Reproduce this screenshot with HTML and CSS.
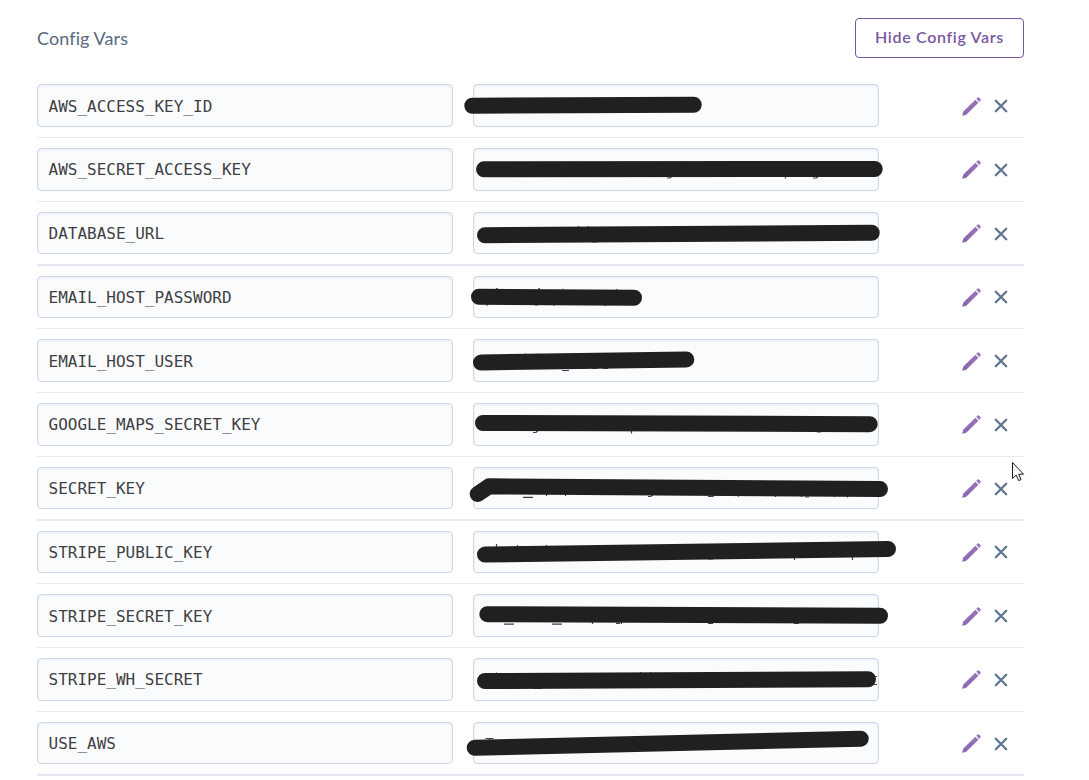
FILE: index.html
```html
<!DOCTYPE html>
<html lang="en">
<head>
<meta charset="utf-8">
<title>Config Vars</title>
<link rel="stylesheet" href="styles.css">
</head>
<body>
<svg class="defs" aria-hidden="true">
  <defs>
    <linearGradient id="violet" x1="0" y1="0" x2="0" y2="1"><stop offset="0" stop-color="#9b79bd"/><stop offset="1" stop-color="#8a65ae"/></linearGradient>
    <symbol id="pencil" viewBox="0 0 19 19"><path fill="url(#violet)" d="M.2 18.800 1.100 15.300Q1.300 14.600 1.900 14L13.300 2.700 16.400 5.800 5 17.100Q4.400 17.700 3.700 17.900ZM14.200 1.800 15 1Q16.300-.3 17.600.9L18.100 1.400Q19.400 2.700 18.100 4.100L17.300 4.900Z"/></symbol>
    <symbol id="cross" viewBox="0 0 14 14"><path fill="none" stroke="#62758f" stroke-width="2.300" stroke-linecap="round" d="M1.800 1.800 12.200 12.200M12.200 1.800 1.800 12.200"/></symbol>
  </defs>
</svg>
<main class="panel">
  <header class="head">
    <h1 class="title">Config Vars</h1>
    <button class="toggle">Hide Config Vars</button>
  </header>
  <ul class="vars">
    <li class="row low"><span class="field key">AWS_ACCESS_KEY_ID</span><span class="field value"></span><span class="actions"><svg class="pencil"><use href="#pencil"/></svg><svg class="cross"><use href="#cross"/></svg></span></li>
    <li class="row"><span class="field key">AWS_SECRET_ACCESS_KEY</span><span class="field value"></span><span class="actions"><svg class="pencil"><use href="#pencil"/></svg><svg class="cross"><use href="#cross"/></svg></span></li>
    <li class="row short thick"><span class="field key">DATABASE_URL</span><span class="field value"></span><span class="actions"><svg class="pencil"><use href="#pencil"/></svg><svg class="cross"><use href="#cross"/></svg></span></li>
    <li class="row short"><span class="field key">EMAIL_HOST_PASSWORD</span><span class="field value"></span><span class="actions"><svg class="pencil"><use href="#pencil"/></svg><svg class="cross"><use href="#cross"/></svg></span></li>
    <li class="row low"><span class="field key">EMAIL_HOST_USER</span><span class="field value"></span><span class="actions"><svg class="pencil"><use href="#pencil"/></svg><svg class="cross"><use href="#cross"/></svg></span></li>
    <li class="row"><span class="field key">GOOGLE_MAPS_SECRET_KEY</span><span class="field value"></span><span class="actions"><svg class="pencil"><use href="#pencil"/></svg><svg class="cross"><use href="#cross"/></svg></span></li>
    <li class="row short thick"><span class="field key">SECRET_KEY</span><span class="field value"></span><span class="actions"><svg class="pencil"><use href="#pencil"/></svg><svg class="cross"><use href="#cross"/></svg></span></li>
    <li class="row short"><span class="field key">STRIPE_PUBLIC_KEY</span><span class="field value"></span><span class="actions"><svg class="pencil"><use href="#pencil"/></svg><svg class="cross"><use href="#cross"/></svg></span></li>
    <li class="row low"><span class="field key">STRIPE_SECRET_KEY</span><span class="field value"></span><span class="actions"><svg class="pencil"><use href="#pencil"/></svg><svg class="cross"><use href="#cross"/></svg></span></li>
    <li class="row"><span class="field key">STRIPE_WH_SECRET</span><span class="field value"></span><span class="actions"><svg class="pencil"><use href="#pencil"/></svg><svg class="cross"><use href="#cross"/></svg></span></li>
    <li class="row short thick"><span class="field key">USE_AWS</span><span class="field value"></span><span class="actions"><svg class="pencil"><use href="#pencil"/></svg><svg class="cross"><use href="#cross"/></svg></span></li>
  </ul>
</main>
<svg class="marker" viewBox="0 0 1089 780" aria-hidden="true">
  <!-- slivers of the values left visible at the marker's edges -->
  <path class="sliver" d="M667 178h3l1.500-1.500M785.500 176v2.500M813 178h3.500l1.500-1.500
    M578.500 226v2M588.500 226v2M592 242h5
    M486 304.800h2M535 304.800h3M553 304.800h2M603 304.900h4M496 288.800h2M538 288.800h2M563 288.800v2M617 289v2
    M525.500 353.500v3M537.500 353.500v3M562 370.500h7M582 368.500h4M592 368.500h5M603 368.500h5
    M533 432.500h3l2-2M631.500 430v3.500M817 431.800h4
    M523 497.300h10M546.500 494v2M565.500 494v2M648 496.500h3l2-2M708 496.500h5l2-2M738 496.700l2-3M775.500 494v3M801.500 494v3M805 497h4M834 497l2-3M847.500 494v3.500
    M496.500 544v4M517.500 545v3M546.500 545v3M708 559h5M794.500 556v4M852.500 556v4
    M504 624.200h10M552 624.200h10M592.500 621v3M616 623.300h4M621.500 621v3M708 623.500h5M794 623.500h5
    M496.500 672.500v3M533 688.500h9M640.500 672v2M650.500 672v2M877 676.500h-4M873 684.500h4
    M485.500 738.500h8M489.500 738v3"/>
  <g class="ink">
    <path d="M472.300 105.700 693.700 104.800"/>
    <path d="M484 169.300 874.700 169"/>
    <path d="M485 235.200 871.700 232.800"/>
    <path d="M479 296.800 634 297.700"/>
    <path d="M481 362.500 686.300 359.500"/>
    <path d="M483 423 869.700 424.200"/>
    <path d="M477.700 494 489 486.300 880 489"/>
    <path d="M485 554.500 888 549"/>
    <path d="M487.300 614.200 880 615.700"/>
    <path d="M485 681 868 679.300"/>
    <path d="M474.700 747.700 860.700 738.800"/>
  </g>
  <path class="pointer" d="M1012.500 462.500V478.500L1016.200 475.100 1018.700 480.600 1021 479.600 1018.600 474.200H1023.500Z"/>
</svg>
</body>
</html>
```
FILE: styles.css
```css
body {
  margin: 0;
  background: #fff;
  overflow: hidden;
}

.defs {
  position: absolute;
  width: 0;
  height: 0;
}

.panel {
  box-sizing: border-box;
  width: 1024px;
  height: 780px;
  padding: 18px 0 0 37px;
}

.head {
  display: flex;
  justify-content: space-between;
  height: 56px;
}

.title {
  margin: 0;
  font: 400 18px/41px Lato, sans-serif;
  letter-spacing: 0.1px;
  color: #596981;
}

.toggle {
  box-sizing: border-box;
  width: 169px;
  height: 40px;
  padding: 0 0 2px;
  border: 1px solid #79589f;
  border-radius: 4px;
  background: #fff;
  color: #79589f;
  font: 600 16px/36px Lato, sans-serif;
  letter-spacing: 0.68px;
  white-space: nowrap;
}

.vars {
  margin: 0;
  padding: 0;
  list-style: none;
}

.row {
  display: flex;
  padding: 10px 0;
  border-bottom: 1px solid #e6e9f3;
}

.thick {
  border-bottom-width: 2px;
}

.field {
  box-sizing: border-box;
  height: 43px;
  padding: 0 10px 0 10.5px;
  border: 1px solid #cfd7e6;
  border-radius: 4px;
  background: #fafbfd;
  box-shadow: inset 0 1px 3px #e9edf5;
  color: #3f3f44;
  font: 16px/42px "DejaVu Sans Mono", monospace;
}

.short .field {
  height: 42px;
}

.low .field {
  line-height: 44px;
}

.key {
  width: 416px;
}

.value {
  width: 406px;
  margin-left: 20px;
}

.actions {
  display: flex;
  align-items: center;
  gap: 13px;
  margin-left: 83px;
}

.pencil {
  width: 19px;
  height: 19px;
}

.low .pencil {
  margin-top: 2px;
}

.short .pencil {
  margin-top: 1px;
}

.cross {
  width: 14px;
  height: 14px;
}

.thick .cross {
  margin-top: 2px;
}

.marker {
  position: absolute;
  top: 0;
  left: 0;
  width: 1089px;
  height: 780px;
  pointer-events: none;
}

.ink {
  fill: none;
  stroke: #202020;
  stroke-width: 16px;
  stroke-linecap: round;
  stroke-linejoin: round;
}

.sliver {
  fill: none;
  stroke: #414149;
  stroke-width: 1.2px;
}

.pointer {
  fill: #fff;
  stroke: #171722;
  stroke-width: 1px;
}
```
